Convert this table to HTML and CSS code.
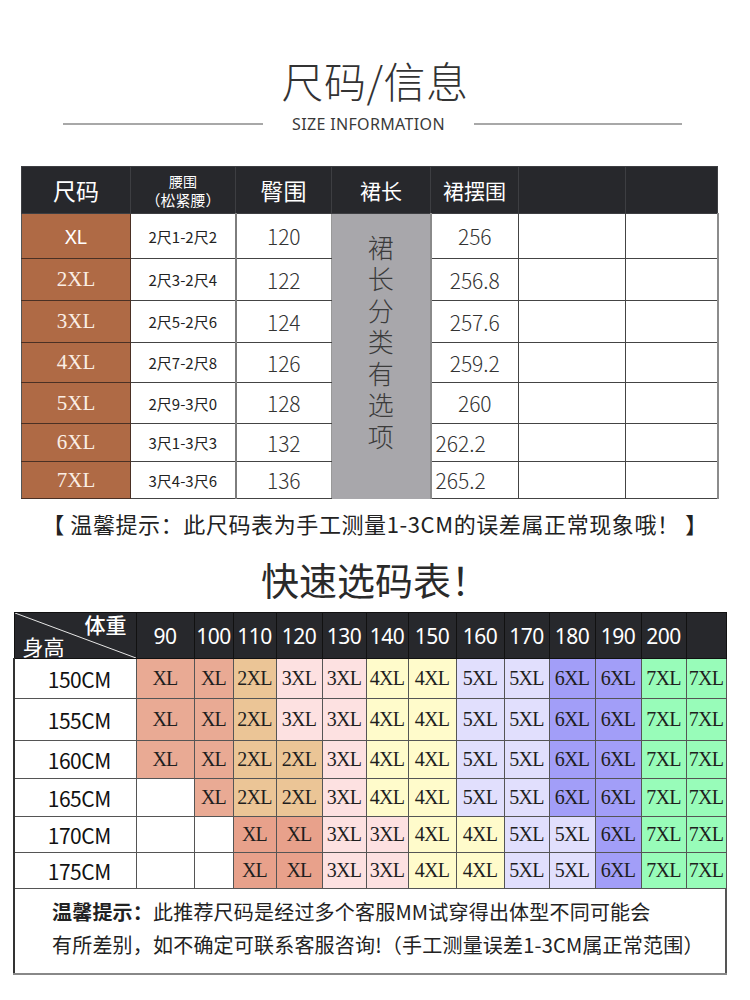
FILE: index.html
```html
<!DOCTYPE html>
<html lang="zh">
<head>
<meta charset="utf-8">
<title>尺码信息</title>
<link rel="stylesheet" href="styles.css">
</head>
<body>
<div class="page">
  <header class="hero">
    <h1 class="title">尺码/信息</h1>
    <div class="sub"><span class="rule rule-l"></span><span class="sub-text">SIZE INFORMATION</span><span class="rule rule-r"></span></div>
  </header>

  <table class="size">
    <colgroup>
      <col class="c1"><col class="c2"><col class="c3"><col class="c4"><col class="c5"><col class="c6"><col class="c7">
    </colgroup>
    <thead>
      <tr class="h-head">
        <th class="th-big">尺码</th>
        <th class="th-waist"><span class="w1">腰围</span><span class="w2">（松紧腰）</span></th>
        <th class="th-big">臀围</th>
        <th class="th-mid">裙长</th>
        <th class="th-mid">裙摆围</th>
        <th></th>
        <th></th>
      </tr>
    </thead>
    <tbody>
      <tr class="r1">
        <td class="sz sz-sans">XL</td><td class="waist">2尺1-2尺2</td><td class="num hip">120</td>
        <td class="len" rowspan="7"><span class="len-text">裙长分类有选项</span></td>
        <td class="num hem">256</td><td class="blank"></td><td class="blank last"></td>
      </tr>
      <tr class="r2">
        <td class="sz">2XL</td><td class="waist">2尺3-2尺4</td><td class="num hip">122</td>
        <td class="num hem">256.8</td><td class="blank"></td><td class="blank last"></td>
      </tr>
      <tr class="r3">
        <td class="sz">3XL</td><td class="waist">2尺5-2尺6</td><td class="num hip">124</td>
        <td class="num hem">257.6</td><td class="blank"></td><td class="blank last"></td>
      </tr>
      <tr class="r4">
        <td class="sz">4XL</td><td class="waist">2尺7-2尺8</td><td class="num hip">126</td>
        <td class="num hem">259.2</td><td class="blank"></td><td class="blank last"></td>
      </tr>
      <tr class="r5">
        <td class="sz">5XL</td><td class="waist">2尺9-3尺0</td><td class="num hip">128</td>
        <td class="num hem">260</td><td class="blank"></td><td class="blank last"></td>
      </tr>
      <tr class="r6">
        <td class="sz">6XL</td><td class="waist">3尺1-3尺3</td><td class="num hip">132</td>
        <td class="num hem hem-left">262.2</td><td class="blank"></td><td class="blank last"></td>
      </tr>
      <tr class="r7">
        <td class="sz">7XL</td><td class="waist">3尺4-3尺6</td><td class="num hip">136</td>
        <td class="num hem hem-left">265.2</td><td class="blank"></td><td class="blank last"></td>
      </tr>
    </tbody>
  </table>

  <p class="tip">【 温馨提示：此尺码表为手工测量1-3CM的误差属正常现象哦！ 】</p>

  <h2 class="title2">快速选码表！</h2>

  <table class="quick">
    <colgroup>
      <col class="q0"><col class="q1"><col class="q2"><col class="q3"><col class="q4"><col class="q5"><col class="q6"><col class="q7"><col class="q8"><col class="q9"><col class="q10"><col class="q11"><col class="q12"><col class="q13">
    </colgroup>
    <thead>
      <tr class="qh">
        <th class="corner">
          <svg class="diag" viewBox="0 0 122 45" preserveAspectRatio="none" aria-hidden="true"><line x1="0" y1="0" x2="122" y2="45" stroke="#e8e8e8" stroke-width="1"/></svg>
          <span class="wt">体重</span><span class="ht">身高</span>
        </th>
        <th>90</th><th>100</th><th>110</th><th>120</th><th>130</th><th>140</th><th>150</th><th>160</th><th>170</th><th>180</th><th>190</th><th>200</th><th></th>
      </tr>
    </thead>
    <tbody>
      <tr class="qr a">
        <td class="hl">150CM</td>
        <td class="xl">XL</td><td class="xl">XL</td><td class="x2">2XL</td><td class="x3">3XL</td><td class="x3">3XL</td><td class="x4">4XL</td><td class="x4">4XL</td><td class="x5">5XL</td><td class="x5">5XL</td><td class="x6">6XL</td><td class="x6">6XL</td><td class="x7">7XL</td><td class="x7">7XL</td>
      </tr>
      <tr class="qr b">
        <td class="hl">155CM</td>
        <td class="xl">XL</td><td class="xl">XL</td><td class="x2">2XL</td><td class="x3">3XL</td><td class="x3">3XL</td><td class="x4">4XL</td><td class="x4">4XL</td><td class="x5">5XL</td><td class="x5">5XL</td><td class="x6">6XL</td><td class="x6">6XL</td><td class="x7">7XL</td><td class="x7">7XL</td>
      </tr>
      <tr class="qr c">
        <td class="hl">160CM</td>
        <td class="xl">XL</td><td class="xl">XL</td><td class="x2">2XL</td><td class="x2">2XL</td><td class="x3">3XL</td><td class="x4">4XL</td><td class="x4">4XL</td><td class="x5">5XL</td><td class="x5">5XL</td><td class="x6">6XL</td><td class="x6">6XL</td><td class="x7">7XL</td><td class="x7">7XL</td>
      </tr>
      <tr class="qr c">
        <td class="hl">165CM</td>
        <td class="em"></td><td class="xl">XL</td><td class="x2">2XL</td><td class="x2">2XL</td><td class="x3">3XL</td><td class="x4">4XL</td><td class="x4">4XL</td><td class="x5">5XL</td><td class="x5">5XL</td><td class="x6">6XL</td><td class="x6">6XL</td><td class="x7">7XL</td><td class="x7">7XL</td>
      </tr>
      <tr class="qr d">
        <td class="hl">170CM</td>
        <td class="em"></td><td class="em"></td><td class="xl xd">XL</td><td class="xl xd">XL</td><td class="x3">3XL</td><td class="x3">3XL</td><td class="x4">4XL</td><td class="x4">4XL</td><td class="x5">5XL</td><td class="x5">5XL</td><td class="x6">6XL</td><td class="x7">7XL</td><td class="x7">7XL</td>
      </tr>
      <tr class="qr d">
        <td class="hl">175CM</td>
        <td class="em"></td><td class="em"></td><td class="xl xd">XL</td><td class="xl xd">XL</td><td class="x3">3XL</td><td class="x3">3XL</td><td class="x4">4XL</td><td class="x4">4XL</td><td class="x5">5XL</td><td class="x5">5XL</td><td class="x6">6XL</td><td class="x7">7XL</td><td class="x7">7XL</td>
      </tr>
      <tr class="qf">
        <td colspan="14" class="foot">
          <p class="foot-line"><b class="foot-b">温馨提示：</b>此推荐尺码是经过多个客服MM试穿得出体型不同可能会</p>
          <p class="foot-line">有所差别，如不确定可联系客服咨询!（手工测量误差1-3CM属正常范围）</p>
        </td>
      </tr>
    </tbody>
  </table>
</div>
</body>
</html>
```

FILE: styles.css
```css
html, body {
  margin: 0;
  padding: 0;
  background: #ffffff;
}

body {
  font-family: "Noto Sans CJK SC", "Noto Sans", sans-serif;
  color: #222;
}

.page {
  width: 750px;
  height: 1000px;
  overflow: hidden;
}

/* ---------- hero ---------- */
.hero {
  padding-top: 55px;
}

.title {
  margin: 0;
  text-align: center;
  font-size: 42px;
  line-height: 50px;
  font-weight: 300;
  color: #333;
  letter-spacing: 0.5px;
}

.sub {
  display: flex;
  align-items: center;
  margin-top: 8px;
  height: 22px;
  padding-left: 63px;
}

.rule {
  display: block;
  height: 2px;
  background: #a8a8a8;
}

.rule-l { width: 200px; }
.rule-r { width: 208px; }

.sub-text {
  font-family: "Noto Sans", "Liberation Sans", sans-serif;
  font-size: 16px;
  color: #3a3a3a;
  margin: 0 29px;
  letter-spacing: 0.35px;
  white-space: nowrap;
}

/* ---------- size table ---------- */
.size {
  margin: 31px 0 0 21px;
  width: 696px;
  border-collapse: collapse;
  table-layout: fixed;
}

.size .c1 { width: 109px; }
.size .c2 { width: 105px; }
.size .c3 { width: 96px; }
.size .c4 { width: 99px; }
.size .c5 { width: 88px; }
.size .c6 { width: 107px; }
.size .c7 { width: 92px; }

.size th {
  background: #27282c;
  color: #ffffff;
  font-weight: 400;
  border: 1px solid #3d3e42;
  padding: 0;
  height: 46px;
  text-align: center;
  vertical-align: middle;
}

.th-big { font-size: 23px; }
.th-mid { font-size: 21px; }

.th-waist {
  line-height: 1;
}

.th-waist .w1,
.th-waist .w2 {
  display: block;
}

.th-waist .w1 { font-size: 14px; margin-bottom: 4px; }
.th-waist .w2 { font-size: 15px; }

.size td {
  border: 1px solid #444;
  padding: 0;
  text-align: center;
  vertical-align: middle;
}

.size .r1 td { height: 44px; }
.size .r2 td { height: 41px; }
.size .r3 td { height: 41px; }
.size .r4 td { height: 39px; }
.size .r5 td { height: 40px; }
.size .r6 td { height: 37px; }
.size .r7 td { height: 36px; }

.size td.sz {
  background: #af6a45;
  color: #fbeee4;
  font-family: "Liberation Serif", "DejaVu Serif", serif;
  font-size: 21px;
  border-color: #4a3024;
  border-left-color: #555;
}

.size td.sz-sans {
  font-family: "Noto Sans", "Liberation Sans", sans-serif;
  font-size: 20px;
  color: #ffffff;
}

.size td.waist {
  font-size: 15px;
  color: #222;
  border-right: 2px solid #7d7d7d;
}

.size td.num {
  font-size: 21px;
  font-weight: 300;
  color: #333;
}

.size td.hip {
  border-right-color: #999;
}

.size td.len {
  background: #a8a7ab;
  border: none;
  vertical-align: top;
}

.len-text {
  display: inline-block;
  writing-mode: vertical-rl;
  text-orientation: upright;
  font-size: 26px;
  font-weight: 300;
  color: #3b3b3b;
  letter-spacing: 5.5px;
  margin-top: 21px;
}

.size td.hem {
  border-left: 2px solid #8a8a8a;
}

.size td.hem-left {
  text-align: left;
  padding-left: 4px;
}

.size td.blank {
  border-left: 1px solid #111;
}

.size td.last {
  border-right: 2px solid #8c8c8c;
}

/* ---------- tip ---------- */
.tip {
  margin: 11px 0 0 0;
  text-align: center;
  font-size: 22px;
  line-height: 26px;
  color: #222;
  letter-spacing: 0.6px;
}

.title2 {
  margin: 20px 0 0 0;
  text-align: center;
  font-size: 38px;
  line-height: 46px;
  font-weight: 400;
  color: #2a2a2a;
}

/* ---------- quick table ---------- */
.quick {
  margin: 10px 0 0 13px;
  width: 712px;
  border-collapse: collapse;
  table-layout: fixed;
}

.quick .q0 { width: 122px; }
.quick .q1 { width: 58px; }
.quick .q2 { width: 39px; }
.quick .q3 { width: 43px; }
.quick .q4 { width: 46px; }
.quick .q5 { width: 44px; }
.quick .q6 { width: 42px; }
.quick .q7 { width: 48px; }
.quick .q8 { width: 48px; }
.quick .q9 { width: 45px; }
.quick .q10 { width: 46px; }
.quick .q11 { width: 46px; }
.quick .q12 { width: 45px; }
.quick .q13 { width: 40px; }

.quick th {
  background: #27282c;
  color: #ffffff;
  font-family: "Noto Sans", "Liberation Sans", sans-serif;
  font-weight: 400;
  font-size: 21px;
  height: 45px;
  padding: 0;
  border: 1px solid #111;
  text-align: center;
  vertical-align: middle;
  white-space: nowrap;
  letter-spacing: -0.5px;
}

.quick th.corner {
  position: relative;
  font-family: "Noto Sans CJK SC", sans-serif;
  font-size: 21px;
  letter-spacing: 0;
}

.diag {
  position: absolute;
  left: 0;
  top: 0;
  width: 100%;
  height: 100%;
  display: block;
}

.wt {
  position: absolute;
  right: 9px;
  top: -2px;
  line-height: 26px;
  font-weight: 500;
}

.ht {
  position: absolute;
  left: 8px;
  bottom: 0;
  line-height: 24px;
}

.quick td {
  border: 1px solid #555;
  padding: 0;
  text-align: center;
  vertical-align: middle;
  font-family: "Liberation Serif", "DejaVu Serif", serif;
  font-size: 20px;
  color: #1e1e1e;
  white-space: nowrap;
  letter-spacing: -0.8px;
}

.quick .a td { height: 39px; }
.quick .b td { height: 41px; }
.quick .c td { height: 37px; }
.quick .d td { height: 35px; }

.quick td.hl {
  background: #ffffff;
  font-family: "Noto Sans CJK SC", "Noto Sans", sans-serif;
  font-size: 21px;
  color: #111;
  padding-left: 8px;
  letter-spacing: -0.5px;
  border-left: 2px solid #333;
}

.quick td.em { background: #ffffff; }
.quick td.xl { background: #e9aa94; }
.quick td.xd { background: #e8a18b; }
.quick td.x2 { background: #ebc596; }
.quick td.x3 { background: #fde1e1; }
.quick td.x4 { background: #fffbcb; }
.quick td.x5 { background: #e1dffd; }
.quick td.x6 { background: #a29ef8; }
.quick td.x7 { background: #98fcb9; }

.quick td.foot {
  height: 78px;
  text-align: left;
  vertical-align: top;
  font-family: "Noto Sans CJK SC", "Noto Sans", sans-serif;
  font-size: 20px;
  color: #222;
  letter-spacing: 0.2px;
  padding: 6px 0 0 37px;
  border-left: 2px solid #333;
  border-right: 2px solid #555;
  border-bottom: 2px solid #888;
  white-space: nowrap;
}

.foot-line {
  margin: 0;
  line-height: 33px;
}

.foot-b {
  font-weight: 700;
}
```
